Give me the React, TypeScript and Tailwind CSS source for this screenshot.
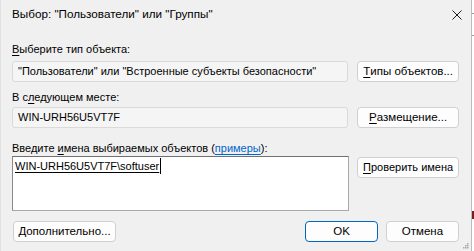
import React from "react";

const font = { fontFamily: '"Liberation Sans", Arial, sans-serif' };

function Btn({ children, className = "" }: { children: React.ReactNode; className?: string }) {
  return (
    <div
      className={
        "h-[21px] flex items-center justify-center whitespace-nowrap rounded-[4px] border border-[#d0d0d0] bg-[#fdfdfd] text-[11.5px] text-black leading-none " +
        className
      }
    >
      {children}
    </div>
  );
}

export default function App() {
  return (
    <div className="w-[474px] h-[251px] flex bg-white overflow-hidden whitespace-nowrap" style={font}>
      <div className="w-[472px] h-full bg-[#f0f0f0] border-r border-[#bdbdbd] border-l border-l-[#e2e2e2] flex flex-col pl-[11px] pr-[12px] text-[11px] text-black">
        <div className="h-[28px] flex items-center justify-between">
          <span className="text-[11.7px] leading-none">Выбор: "Пользователи" или "Группы"</span>
          <svg width="10" height="10" viewBox="0 0 10 10" className="-mr-[3px] mt-[2px]">
            <path d="M0.5 0.5 L9.5 9.5 M9.5 0.5 L0.5 9.5" stroke="#1a1a1a" strokeWidth="1" />
          </svg>
        </div>

        <div className="mt-[13px] h-[16px] leading-[16px]">
          <span className="underline underline-offset-2">В</span>ыберите тип объекта:
        </div>
        <div className="mt-[4px] flex items-center gap-[9px]">
          <div className="w-[337px] h-[21px] rounded-[3px] border border-[#dadada] bg-[#f5f5f5] flex items-center pl-[5px]">
            "Пользователи" или "Встроенные субъекты безопасности"
          </div>
          <Btn className="w-[102px]">
            <span className="underline underline-offset-2">Т</span>ипы объектов...
          </Btn>
        </div>

        <div className="mt-[7px] h-[16px] leading-[16px]">
          В с<span className="underline underline-offset-2">л</span>едующем месте:
        </div>
        <div className="mt-[2px] flex items-center gap-[9px]">
          <div className="w-[337px] h-[21px] rounded-[3px] border border-[#dadada] bg-[#f5f5f5] flex items-center pl-[5px]">
            WIN-URH56U5VT7F
          </div>
          <Btn className="w-[102px]">
            <span className="underline underline-offset-2">Р</span>азмещение...
          </Btn>
        </div>

        <div className="mt-[12px] h-[16px] leading-[16px]">
          Введите <span className="underline underline-offset-2">и</span>мена выбираемых объектов (<span className="text-[#0066cc] underline underline-offset-2">примеры</span>):
        </div>
        <div className="flex items-start gap-[8px]">
          <div className="w-[338px] h-[55px] bg-white border border-[#a9a9a9] border-t-[#707070] border-l-[#8a8a8a] pl-[2px] pt-[1px]">
            <span className="inline-flex items-center h-[16px] leading-[16px] border-r border-black pr-px">
              <span className="underline underline-offset-2">WIN-URH56U5VT7F\softuser</span>
            </span>
          </div>
          <Btn className="w-[102px] mt-[1px] h-[20px] text-[11px]">
            <span className="underline underline-offset-2">П</span>роверить имена
          </Btn>
        </div>

        <div className="mt-[10px] flex items-center">
          <Btn className="w-[103px] h-[20px] ml-[1px]">
            <span className="underline underline-offset-2">Д</span>ополнительно...
          </Btn>
          <div className="flex-1" />
          <div className="w-[73px] h-[21px] flex items-center justify-center rounded-[4px] border-[1.5px] border-[#0067c0] bg-[#fdfdfd] text-[11.5px]">
            OK
          </div>
          <Btn className="w-[73px] ml-[8px]">Отмена</Btn>
        </div>
        <div className="flex-1 flex justify-end items-end pb-[2px] -mr-[10px]">
          <svg width="7" height="7" viewBox="0 0 7 7">
            <rect x="5" y="1" width="1.5" height="1.5" fill="#a8a8a8" />
            <rect x="3" y="3" width="1.5" height="1.5" fill="#a8a8a8" />
            <rect x="5" y="3" width="1.5" height="1.5" fill="#a8a8a8" />
            <rect x="1" y="5" width="1.5" height="1.5" fill="#a8a8a8" />
            <rect x="3" y="5" width="1.5" height="1.5" fill="#a8a8a8" />
            <rect x="5" y="5" width="1.5" height="1.5" fill="#a8a8a8" />
          </svg>
        </div>
      </div>
      <div className="w-[2px] h-full flex flex-col bg-white">
        <div className="h-[13px]" />
        <div className="h-px bg-[#9a9a9a]" />
        <div className="h-[21px]" />
        <div className="h-px bg-[#9a9a9a]" />
        <div className="h-[175px]" />
        <div className="h-[8px] bg-[#7a1f1f]" />
      </div>
    </div>
  );
}
